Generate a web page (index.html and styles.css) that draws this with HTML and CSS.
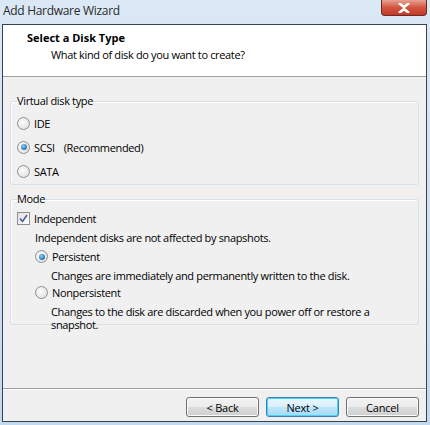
FILE: index.html
```html
<!DOCTYPE html>
<html lang="en">
<head>
    <meta charset="UTF-8">
    <title>Add Hardware Wizard</title>
    <link rel="stylesheet" href="styles.css">
</head>
<body>
    <div class="window">
        <div class="titlebar">
            <span class="title">Add Hardware Wizard</span>
            <div class="close-btn">
                <svg width="14" height="10" viewBox="0 0 14 10"><path d="M2 0 L7 4 L12 0 M2 10 L7 6 L12 10" stroke="#fff" stroke-width="2.6" fill="none"/></svg>
            </div>
        </div>

        <div class="client">
            <div class="header">
                <div class="header-title">Select a Disk Type</div>
                <div class="header-sub">What kind of disk do you want to create?</div>
            </div>

            <div class="content">
                <fieldset class="group group-type">
                    <legend>Virtual disk type</legend>
                    <div class="option"><span class="radio"></span><span>IDE</span></div>
                    <div class="option"><span class="radio checked"></span><span>SCSI</span><span class="note">(Recommended)</span></div>
                    <div class="option"><span class="radio"></span><span>SATA</span></div>
                </fieldset>

                <fieldset class="group group-mode">
                    <legend>Mode</legend>
                    <div class="option">
                        <span class="checkbox">
                            <svg width="9" height="9" viewBox="0 0 9 9"><path d="M1 4.5 L3.5 7.5 L8 1" stroke="#4a5f97" stroke-width="1.6" fill="none"/></svg>
                        </span>
                        <span>Independent</span>
                    </div>
                    <div class="indent">
                        <p class="desc first">Independent disks are not affected by snapshots.</p>
                        <div class="option sub"><span class="radio checked"></span><span>Persistent</span></div>
                        <p class="desc indent2">Changes are immediately and permanently written to the disk.</p>
                        <div class="option sub"><span class="radio"></span><span>Nonpersistent</span></div>
                        <p class="desc indent2 last">Changes to the disk are discarded when you power off or restore a snapshot.</p>
                    </div>
                </fieldset>
            </div>

            <div class="footer">
                <button class="btn">&lt; Back</button>
                <button class="btn default">Next &gt;</button>
                <button class="btn">Cancel</button>
            </div>
        </div>
    </div>
</body>
</html>
```

FILE: styles.css
```css
/* Base */
body {
    margin: 0;
    font-family: 'Open Sans', 'Noto Sans', sans-serif;
    font-size: 11px;
    letter-spacing: -0.35px;
    color: #000;
    background: #c9dcef;
}
.window {
    width: 430px;
    height: 425px;
    background: linear-gradient(180deg, #dbe8f5 0%, #c4d8ee 100%);
    overflow: hidden;
}

/* Title bar */
.titlebar {
    height: 24px;
    display: flex;
    justify-content: space-between;
    align-items: flex-start;
}
.title {
    font-size: 12px;
    letter-spacing: -0.3px;
    padding: 2px 0 0 3px;
    color: #2a2a2a;
}
.close-btn {
    width: 44px;
    height: 15px;
    margin-right: 3px;
    background: linear-gradient(180deg, #e8a294 0%, #d2553f 50%, #c13a27 100%);
    border: 1px solid #6d2a22;
    border-top: none;
    border-radius: 0 0 4px 4px;
    display: flex;
    justify-content: center;
    align-items: center;
}

/* Client area */
.client {
    margin: 0 3px 0 2px;
    height: 396px;
    border: 1px solid #34434f;
    background: #f0f0f0;
    display: flex;
    flex-direction: column;
}
.header {
    background: #fff;
    height: 52px;
    flex-shrink: 0;
    border-bottom: 1px solid #a0a0a0;
    box-sizing: border-box;
    padding: 5px 0 0 24px;
}
.header-title {
    font-weight: bold;
    letter-spacing: 0;
    line-height: 15px;
}
.header-sub {
    padding-left: 24px;
    margin-top: 2px;
    line-height: 16px;
}

.content {
    flex: 1;
    padding: 17px 7px 0 7px;
}

/* Group boxes */
.group {
    margin: 0;
    border: 1px solid #d5dfe5;
    border-radius: 3px;
    box-shadow: inset 1px 1px 0 #fff;
    padding: 0 6px;
}
.group legend {
    padding: 0;
    margin-left: 0;
    line-height: 14px;
}
.group-type {
    height: 86px;
    padding-top: 3px;
}
.group-mode {
    margin-top: 7px;
    padding-top: 4px;
    padding-bottom: 0;
    height: 127px;
}

.option {
    display: flex;
    align-items: center;
    height: 24px;
}
.option .note {
    margin-left: 9px;
}
.group-mode .option {
    height: 17px;
}
.indent {
    padding-left: 18px;
}
.desc {
    margin: 4px 0 2px;
    line-height: 13px;
}
.desc.first {
    margin: 4px 0 4px;
}
.indent2 {
    padding-left: 16px;
}
.last {
    margin-bottom: 0;
}

/* Radio / checkbox */
.radio {
    width: 11px;
    height: 11px;
    border: 1px solid #8e8f8f;
    border-radius: 50%;
    background: radial-gradient(circle at 40% 40%, #fdfdfd 0%, #e4e4e4 70%, #cfcfcf 100%);
    margin-right: 4px;
    display: flex;
    justify-content: center;
    align-items: center;
    flex-shrink: 0;
}
.radio.checked::after {
    content: "";
    width: 6px;
    height: 6px;
    border-radius: 50%;
    background: radial-gradient(circle at 40% 35%, #8fd0f3 0%, #2d7fc1 60%, #1c4f8a 100%);
}
.checkbox {
    width: 11px;
    height: 11px;
    border: 1px solid #8e8f8f;
    background: linear-gradient(135deg, #e0e0e0, #fdfdfd);
    margin-right: 4px;
    display: flex;
    justify-content: center;
    align-items: center;
}

/* Footer */
.footer {
    height: 33px;
    flex-shrink: 0;
    box-sizing: border-box;
    border-top: 1px solid #a0a0a0;
    box-shadow: inset 0 1px 0 #fff;
    display: flex;
    justify-content: flex-end;
    align-items: flex-start;
    gap: 7px;
    padding: 8px 7px 0 0;
}
.btn {
    width: 73px;
    height: 20px;
    font-family: inherit;
    font-size: 11px;
    letter-spacing: -0.2px;
    border: 1px solid #707070;
    border-radius: 3px;
    background: linear-gradient(180deg, #f2f2f2 0%, #ebebeb 50%, #dddddd 51%, #cfcfcf 100%);
    box-shadow: inset 0 0 0 1px #fcfcfc;
    padding: 0;
    color: #000;
}
.btn.default {
    border-color: #3c7fb1;
    box-shadow: inset 0 0 0 1px #48d4fb;
    background: linear-gradient(180deg, #eaf6fd 0%, #d9f0fc 50%, #bee6fd 51%, #a7d9f5 100%);
}
```
